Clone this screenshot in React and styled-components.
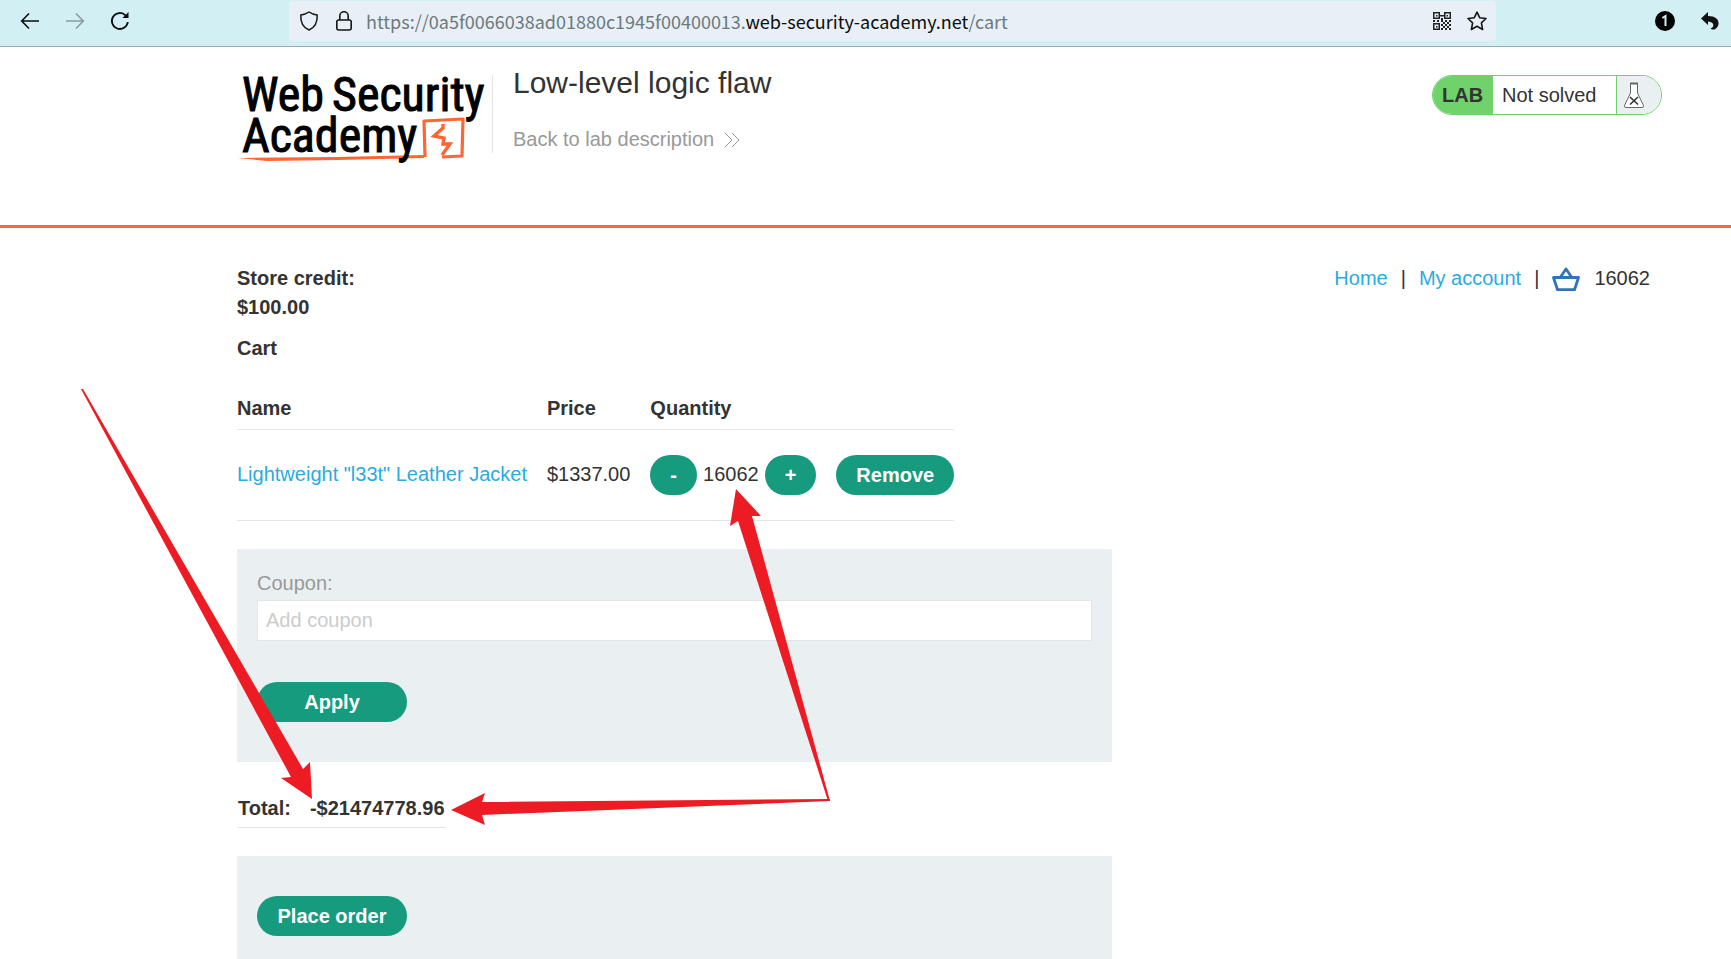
import React from "react";
import styled, { createGlobalStyle } from "styled-components";

const Global = createGlobalStyle`
  * { box-sizing: border-box; }
  html { scrollbar-width: none; background: #fff; }
  body { margin: 0; color: #333332; font: 20px/29px Arial, "Liberation Sans", sans-serif; }
  a { text-decoration: none; }
`;

const Page = styled.div`
  position: relative;
`;

/* browser bar */
const Toolbar = styled.div`
  display: flex;
  align-items: center;
  height: 47px;
  padding: 0 12px 4px 20px;
  background: #d2eff3;
  border-bottom: 1px solid #9aacae;
`;
const IconButton = styled.button`
  display: flex;
  flex: none;
  padding: 0;
  border: 0;
  background: none;
  color: ${(p) => p.$color || "#0c0c0d"};
`;
const HistoryButtons = styled.div`
  display: flex;
  gap: 25px;
  width: 269px;
  flex: none;
`;
const AddressBar = styled.div`
  display: flex;
  flex: 1;
  align-items: center;
  gap: 13px;
  height: 40px;
  padding: 0 9px 0 10px;
  background: #e8eff6;
  border-radius: 4px;
`;
const BarIcons = styled.div`
  display: flex;
  flex: none;
  align-items: center;
  gap: 16px;
`;
const Url = styled.span`
  flex: 1;
  font: 18px/24px "Noto Sans CJK SC", "Noto Sans", sans-serif;
  color: #6c7a7c;
  white-space: nowrap;
  b { font-weight: 400; color: #0c0c0d; }
`;
const Extensions = styled.div`
  display: flex;
  flex: none;
  align-items: center;
  justify-content: flex-end;
  gap: 26px;
  width: 223px;
`;

/* lab header */
const Header = styled.header`
  display: flex;
  align-items: flex-start;
  height: 181px;
  padding: 28px 69px 0 237px;
  border-bottom: 3px solid #ff6633;
`;
const LogoLink = styled.a`
  display: block;
  width: 256px;
  height: 78px;
  border-right: 1px solid #e1e5e6;
`;
const LogoSvg = styled.svg`
  display: block;
  overflow: visible;
`;
const LogoText = styled.text`
  font: 48px "Roboto Condensed", "Liberation Sans Narrow", sans-serif;
  fill: #000;
  stroke: #000;
  stroke-width: 1px;
`;
const TitleBlock = styled.div`
  flex: 1;
  padding-left: 20px;
`;
const Title = styled.h2`
  margin: -7px 0 27px;
  font-size: 30px;
  font-weight: 400;
  line-height: 30px;
`;
const BackLink = styled.a`
  display: inline-flex;
  align-items: center;
  gap: 10px;
  color: #999;
`;
const Status = styled.div`
  display: flex;
  height: 40px;
  overflow: hidden;
  border: 1px solid #6fd26b;
  border-radius: 20px;
  line-height: 38px;
`;
const StatusLabel = styled.strong`
  width: 60px;
  padding-left: 9px;
  background: #6fd26b;
`;
const StatusText = styled.span`
  width: 124px;
  padding-left: 9px;
  border-right: 1px solid #6fd26b;
`;
const StatusIcon = styled.span`
  display: flex;
  align-items: center;
  width: 44px;
  padding-left: 6px;
  background: #eaeff2;
`;

/* shop */
const Main = styled.main`
  padding: 36px 69px 0 237px;
`;
const TopRow = styled.div`
  display: flex;
  justify-content: space-between;
  align-items: flex-start;
`;
const Credit = styled.strong`
  display: block;
  width: 140px;
`;
const Nav = styled.nav`
  display: flex;
  gap: 13px;
  padding-right: 12px;
`;
const Link = styled.a`
  color: #29abe2;
`;
const Basket = styled.span`
  display: flex;
  align-items: center;
  gap: 14px;
`;
const CartTitle = styled.h1`
  margin: 12px 0 0;
  font-size: 20px;
  line-height: 29px;
`;
const CartTable = styled.table`
  margin-top: 30px;
  border-collapse: collapse;
  th, td { padding: 0 20px 0 0; border-bottom: 1px solid #e4e6e8; text-align: left; }
  th { height: 36px; padding-bottom: 4px; }
  td { height: 91px; }
  th:last-child, td:last-child { padding-right: 0; }
`;
const Quantity = styled.div`
  display: flex;
  align-items: center;
  gap: 6px;
`;
const Button = styled.button`
  height: 40px;
  min-width: ${(p) => p.$width || "0"};
  padding: 0 20px;
  border: 0;
  border-radius: 20px;
  background: #179b7f;
  color: #fff;
  font: bold 20px/40px Arial, "Liberation Sans", sans-serif;
`;
const Panel = styled.form`
  display: flex;
  flex-direction: column;
  align-items: flex-start;
  max-width: 875px;
  margin-top: 28px;
  padding: ${(p) => p.$top} 20px 40px;
  background: #eaeff2;
`;
const CouponLabel = styled.label`
  color: #999;
`;
const CouponInput = styled.input`
  width: 100%;
  height: 41px;
  margin: 2px 0 41px;
  padding: 0 8px;
  border: 1px solid #e1e5e6;
  font: 20px Arial, "Liberation Sans", sans-serif;
  &::placeholder { color: #ccc; opacity: 1; }
`;
const Total = styled.table`
  margin-top: 28px;
  border-collapse: collapse;
  border-bottom: 1px solid #e4e6e8;
  font-weight: 700;
  th, td { height: 38px; padding: 0 1px; text-align: left; vertical-align: middle; }
  th { padding-right: 18px; }
`;
const Annotations = styled.svg`
  position: absolute;
  top: 0;
  left: 0;
  pointer-events: none;
`;

const BackIcon = () => (
  <svg width="20" height="20" viewBox="0 0 20 20" fill="none" stroke="currentColor" strokeWidth="1.6">
    <path d="M19 10H2M9 2.500L1.700 10L9 17.500" />
  </svg>
);
const ForwardIcon = () => (
  <svg width="20" height="20" viewBox="0 0 20 20" fill="none" stroke="currentColor" strokeWidth="1.600">
    <path d="M1 10H18M11 2.500L18.300 10L11 17.500" />
  </svg>
);
const ReloadIcon = () => (
  <svg width="20" height="20" viewBox="0 0 20 20" fill="none" stroke="currentColor" strokeWidth="1.800">
    <path d="M17.800 11A8 8 0 1 1 15.500 4.300" />
    <path d="M18.500 1V7H12.500Z" fill="currentColor" stroke="none" />
  </svg>
);
const ShieldIcon = () => (
  <svg width="20" height="20" viewBox="0 0 20 20" fill="none" stroke="#151515" strokeWidth="1.500" strokeLinejoin="round">
    <path d="M10 1C12.500 2.800 15 3.600 18.200 3.900C18.600 11 16 16.500 10 19C4 16.500 1.400 11 1.800 3.900C5 3.600 7.500 2.800 10 1Z" />
  </svg>
);
const LockIcon = () => (
  <svg width="18" height="20" viewBox="0 0 18 20" fill="none" stroke="#151515" strokeWidth="1.600">
    <rect x="1.800" y="9" width="14.400" height="10" rx="2" />
    <path d="M4.800 9V5A4.200 4.200 0 0 1 13.200 5V9" />
  </svg>
);
const QrIcon = () => (
  <svg width="18" height="18" viewBox="0 0 18 18" fill="#222">
    <path d="M0 0h7v7H0zM1.500 1.500v4h4v-4zM11 0h7v7h-7zM12.500 1.500v4h4v-4zM0 11h7v7H0zM1.500 12.500v4h4v-4z" fillRule="evenodd" />
    <path d="M3 3h1.500v1.500H3zM13.500 3H15v1.500h-1.500zM3 14h1.500v1.500H3zM7 3h4v1.500H7zM8 6h2v2H8zM0 8h2v2H0zM4 8h2v2H4zM8 8h2v2H8zM10 10h2v2h-2zM12 8h2v2h-2zM14 10h2v2h-2zM16 8h2v2h-2zM8 12h2v2H8zM12 12h2v2h-2zM16 12h2v2h-2zM10 14h2v2h-2zM14 14h2v2h-2zM8 16h2v2H8zM12 16h2v2h-2zM16 16h2v2h-2z" />
  </svg>
);
const StarIcon = () => (
  <svg width="20" height="20" viewBox="0 0 20 20" fill="none" stroke="#151515" strokeWidth="1.600" strokeLinejoin="round">
    <path d="M10 1.200L12.700 6.700L19 7.500L14.400 11.800L15.600 18.500L10 15.300L4.400 18.500L5.600 11.800L1 7.500L7.300 6.700Z" />
  </svg>
);
const BadgeIcon = () => (
  <svg width="20" height="20" viewBox="0 0 20 20">
    <circle cx="10" cy="10" r="10" fill="#000" />
    <path d="M7.300 7L10.500 5V15" fill="none" stroke="#d2eff3" strokeWidth="2" />
  </svg>
);
const UndoIcon = () => (
  <svg width="18" height="18" viewBox="0 0 18 18" fill="#111">
    <path d="M0 6.500L7 0V4C14 4 18 7 17.500 12C17.300 14.500 15.500 16.500 13.500 17.500C11.500 17.700 10.500 17.500 9.500 16.500C13 16 14.500 10 7 9.500V13Z" />
  </svg>
);
const Chevrons = () => (
  <svg width="16" height="16" viewBox="0 0 16 16" fill="none" stroke="#999">
    <path d="M1 1L8 8L1 15M8 1L15 8L8 15" />
  </svg>
);
const Flask = () => (
  <svg width="22" height="27" viewBox="0 0 22 27" fill="#fff" stroke="#666" strokeWidth="1">
    <path d="M7.500 2V11L1.500 23.500Q1 25.500 3 25.500H19Q21 25.500 20.500 23.500L14.500 11V2" />
    <path d="M7 1.500H15" strokeWidth="2" />
    <path d="M7 15L15 22.500M15 15L7 22.500" stroke="#333" strokeWidth="1.600" />
  </svg>
);
const BasketIcon = () => (
  <svg width="28" height="26" viewBox="0 0 28 26" fill="none" stroke="#2f73b9" strokeWidth="2.800" strokeLinejoin="round">
    <path d="M1.500 11.500H26.500L22.500 23.700H5.500Z" />
    <path d="M8.500 11L14 3L19.500 11" />
  </svg>
);
const Logo = () => (
  <LogoSvg width="252" height="92" viewBox="0 0 252 92" role="img" aria-label="Web Security Academy">
    <path d="M1 83L40 82.500L100 82L187 80V83L100 85L30 86Z" fill="#ff6633" />
    <path d="M188 82L187 46L226 44L225 81L205 82" fill="none" stroke="#ff6633" strokeWidth="3.200" strokeLinejoin="round" />
    <path d="M206 49L206 53L197 61L207 63L206 69L213 69L205 80" fill="none" stroke="#ff6633" strokeWidth="3.400" />
    <LogoText x="5" y="36">Web</LogoText>
    <LogoText x="95" y="36">Security</LogoText>
    <LogoText x="5" y="77">Academy</LogoText>
  </LogoSvg>
);

export default function App() {
  return (
    <Page>
      <Global />
      <Toolbar>
        <HistoryButtons>
          <IconButton aria-label="Back"><BackIcon /></IconButton>
          <IconButton aria-label="Forward" $color="#8a9c9f"><ForwardIcon /></IconButton>
          <IconButton aria-label="Reload"><ReloadIcon /></IconButton>
        </HistoryButtons>
        <AddressBar>
          <BarIcons>
            <ShieldIcon />
            <LockIcon />
          </BarIcons>
          <Url>https://0a5f0066038ad01880c1945f00400013.<b>web-security-academy.net</b>/cart</Url>
          <BarIcons>
            <IconButton aria-label="QR code"><QrIcon /></IconButton>
            <IconButton aria-label="Bookmark"><StarIcon /></IconButton>
          </BarIcons>
        </AddressBar>
        <Extensions>
          <IconButton aria-label="Extension"><BadgeIcon /></IconButton>
          <IconButton aria-label="Undo"><UndoIcon /></IconButton>
        </Extensions>
      </Toolbar>

      <Header>
        <LogoLink href="#academy"><Logo /></LogoLink>
        <TitleBlock>
          <Title>Low-level logic flaw</Title>
          <BackLink href="#description">Back to lab description <Chevrons /></BackLink>
        </TitleBlock>
        <Status>
          <StatusLabel>LAB</StatusLabel>
          <StatusText>Not solved</StatusText>
          <StatusIcon><Flask /></StatusIcon>
        </Status>
      </Header>

      <Main>
        <TopRow>
          <Credit>Store credit: $100.00</Credit>
          <Nav>
            <Link href="#home">Home</Link>
            <span>|</span>
            <Link href="#account">My account</Link>
            <span>|</span>
            <Basket><BasketIcon />16062</Basket>
          </Nav>
        </TopRow>
        <CartTitle>Cart</CartTitle>
        <CartTable>
          <thead>
            <tr><th>Name</th><th>Price</th><th>Quantity</th><th aria-label="Actions" /></tr>
          </thead>
          <tbody>
            <tr>
              <td><Link href="#product">Lightweight "l33t" Leather Jacket</Link></td>
              <td>$1337.00</td>
              <td>
                <Quantity>
                  <Button>-</Button>
                  16062
                  <Button>+</Button>
                </Quantity>
              </td>
              <td><Button>Remove</Button></td>
            </tr>
          </tbody>
        </CartTable>
        <Panel $top="20px" onSubmit={(e) => e.preventDefault()}>
          <CouponLabel htmlFor="coupon">Coupon:</CouponLabel>
          <CouponInput id="coupon" placeholder="Add coupon" />
          <Button $width="150px">Apply</Button>
        </Panel>
        <Total>
          <tbody>
            <tr><th>Total:</th><td>-$21474778.96</td></tr>
          </tbody>
        </Total>
        <Panel $top="40px" onSubmit={(e) => e.preventDefault()}>
          <Button $width="150px">Place order</Button>
        </Panel>
      </Main>

      <Annotations width="840" height="840" viewBox="0 0 840 840" fill="#ed1c24">
        <path d="M81 389L83 389L303 769L310 762L312 799L281 778L291 777Z" />
        <path d="M736 489L761 516L752 516L830 801L828 801L738 521L730 526Z" />
        <path d="M451 810L485 793L482 802L830 799L830 801L482 815L485 825Z" />
      </Annotations>
    </Page>
  );
}
